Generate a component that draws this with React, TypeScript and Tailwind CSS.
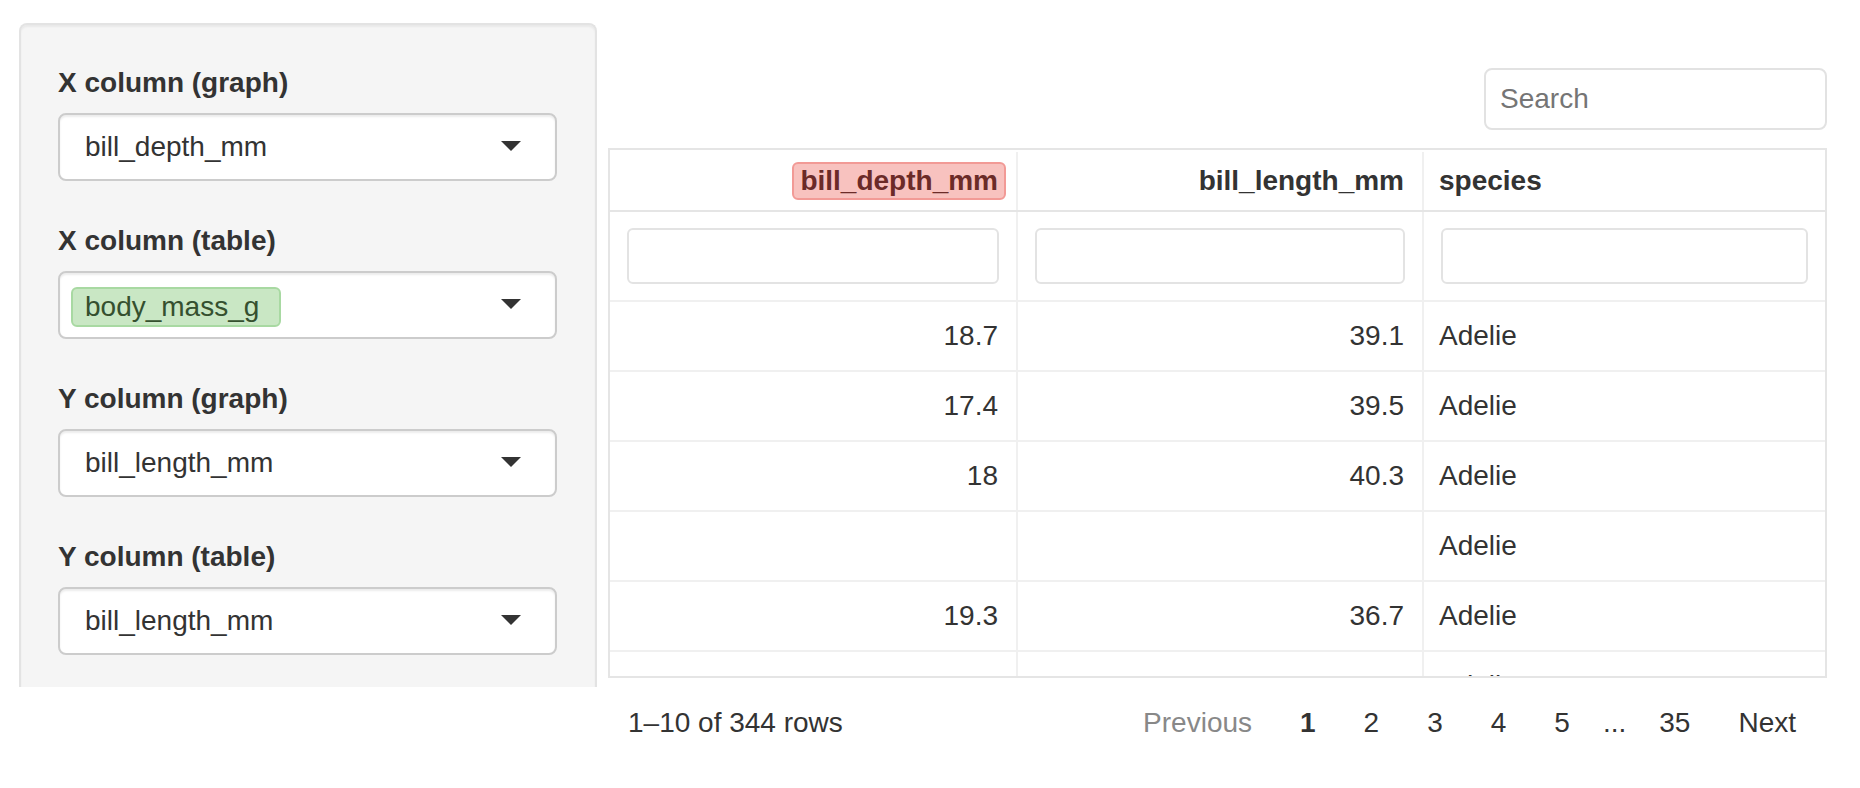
import React from "react";

const FONT = "font-['Liberation_Sans',Arial,Helvetica,sans-serif]";

const rows = [
  ["18.7", "39.1", "Adelie"],
  ["17.4", "39.5", "Adelie"],
  ["18", "40.3", "Adelie"],
  ["", "", "Adelie"],
  ["19.3", "36.7", "Adelie"],
  ["20.6", "39.3", "Adelie"],
];

const COLS = "grid grid-cols-[408px_406px_1fr]";

function Caret() {
  return <span className="mt-[-2px] h-0 w-0 border-x-[10px] border-t-[10px] border-x-transparent border-t-[#333]" />;
}

function SelectField({ label, value, tag }: { label: string; value: string; tag?: boolean }) {
  return (
    <div className="mb-[40px]">
      <label className="mb-[10px] block font-bold leading-[40px]">{label}</label>
      <div
        className={`flex h-[68px] items-center justify-between rounded-[8px] border-2 border-[#cccccc] bg-white pr-[34px] shadow-[inset_0_2px_2px_rgba(0,0,0,0.075)] ${
          tag ? "pl-[11px]" : "pl-[25px]"
        }`}
      >
        {tag ? (
          <span className="mt-[4px] rounded-[6px] border-2 border-[#a8d9a2] bg-[#c9e7c4] pl-[12px] pr-[20px] leading-[36px] text-[#35502f]">
            {value}
          </span>
        ) : (
          <span>{value}</span>
        )}
        <Caret />
      </div>
    </div>
  );
}

function PageButton({ children, className = "" }: { children: React.ReactNode; className?: string }) {
  return <span className={`px-[24px] ${className}`}>{children}</span>;
}

export default function App() {
  return (
    <div className={`flex min-h-screen bg-white pl-[19px] pt-[23px] text-[28px] leading-[40px] text-[#333] ${FONT}`}>
      <aside className="h-[664px] w-[578px] shrink-0 overflow-hidden rounded-t-[8px] border-x-2 border-t-2 border-[#e3e3e3] bg-[#f5f5f5] pl-[37px] pr-[38px] pt-[38px] shadow-[inset_0_2px_2px_rgba(0,0,0,0.05)]">
        <SelectField label="X column (graph)" value="bill_depth_mm" />
        <SelectField label="X column (table)" value="body_mass_g" tag />
        <SelectField label="Y column (graph)" value="bill_length_mm" />
        <SelectField label="Y column (table)" value="bill_length_mm" />
      </aside>

      <main className="ml-[11px] w-[1219px] shrink-0 pt-[45px]">
        <div className="mb-[18px] flex justify-end">
          <input
            placeholder="Search"
            className="h-[62px] w-[343px] rounded-[8px] border-2 border-[#e2e2e2] bg-white px-[14px] outline-none placeholder:text-[#757575]"
          />
        </div>

        <div className="h-[530px] overflow-hidden border-2 border-[#e5e5e5]">
          <div className={`${COLS} h-[62px] border-b-2 border-[#e5e5e5] pt-[2px] font-bold`}>
            <div className="flex items-center justify-end border-r-2 border-[#f0f0f0] pr-[10px]">
              <span className="rounded-[6px] border-2 border-[#f29a96] bg-[#f8c2bf] px-[6px] leading-[34px] text-[#6b2b28]">
                bill_depth_mm
              </span>
            </div>
            <div className="flex items-center justify-end border-r-2 border-[#f0f0f0] pr-[18px]">bill_length_mm</div>
            <div className="flex items-center pl-[15px]">species</div>
          </div>

          <div className={`${COLS} h-[88px]`}>
            {[0, 1, 2].map((i) => (
              <div key={i} className={`flex items-center px-[17px] ${i < 2 ? "border-r-2 border-[#f0f0f0]" : ""}`}>
                <input className="h-[56px] w-full rounded-[6px] border-2 border-[#e3e3e3] bg-white px-[12px] outline-none" />
              </div>
            ))}
          </div>

          {rows.map((r, idx) => (
            <div key={idx} className={`${COLS} h-[70px] border-t-2 border-[#f0f0f0]`}>
              <div className="flex items-center justify-end border-r-2 border-[#f0f0f0] pr-[18px]">{r[0]}</div>
              <div className="flex items-center justify-end border-r-2 border-[#f0f0f0] pr-[18px]">{r[1]}</div>
              <div className="flex items-center pl-[15px]">{r[2]}</div>
            </div>
          ))}
        </div>

        <div className="mt-[25px] flex items-center justify-between pl-[20px] pr-[7px]">
          <span>1–10 of 344 rows</span>
          <div className="flex items-center">
            <PageButton className="text-[#888]">Previous</PageButton>
            <PageButton className="font-bold">1</PageButton>
            <PageButton>2</PageButton>
            <PageButton>3</PageButton>
            <PageButton>4</PageButton>
            <PageButton>5</PageButton>
            <span className="mx-[9px]">...</span>
            <PageButton>35</PageButton>
            <PageButton>Next</PageButton>
          </div>
        </div>
      </main>
    </div>
  );
}
